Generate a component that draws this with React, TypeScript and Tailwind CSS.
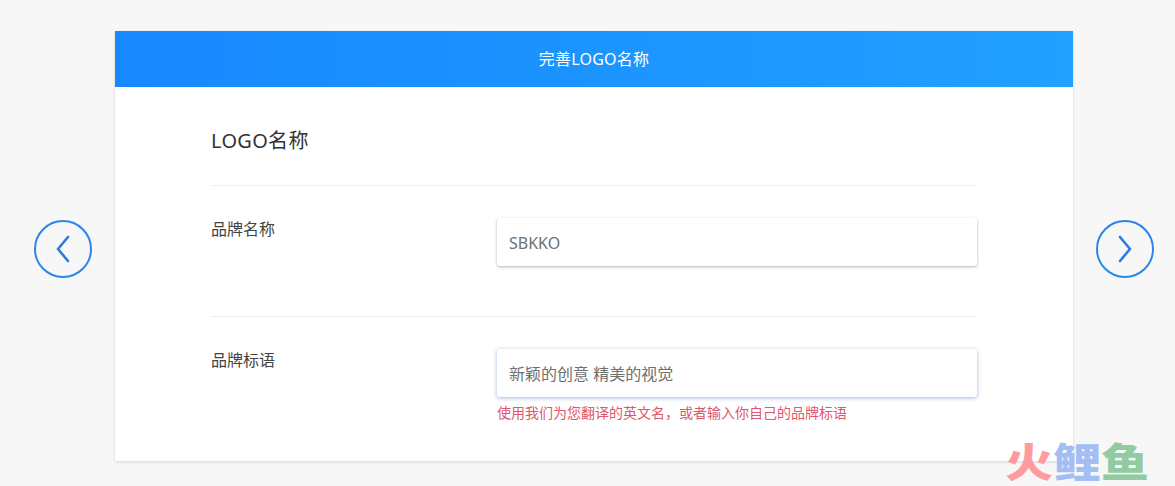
const font = "font-['Noto_Sans','Noto_Sans_CJK_SC',sans-serif]";

function Arrow({ direction }: { direction: 'left' | 'right' }) {
  return (
    <button className="mt-[189px] flex h-[58px] w-[58px] shrink-0 items-center justify-center rounded-full border-2 border-[#2b86ec]">
      <svg width="16" height="28" viewBox="0 0 16 28" fill="none">
        <path
          d={direction === 'left' ? 'M13 2 L3 14 L13 26' : 'M3 2 L13 14 L3 26'}
          stroke="#2b7be0"
          strokeWidth="2.6"
          strokeLinecap="round"
          strokeLinejoin="round"
        />
      </svg>
    </button>
  );
}

function Field({
  label,
  value,
  focused,
  hint,
}: {
  label: string;
  value: string;
  focused?: boolean;
  hint?: string;
}) {
  return (
    <div className="flex border-t border-[#eeeeee] pt-[31px]">
      <label className="w-[286px] shrink-0 text-[16px] leading-[24px] text-[#444444]">{label}</label>
      <div className="-mr-[1px] mt-[1px] w-[481px]">
        <div
          className={`flex h-[48px] items-center rounded-[3px] bg-white px-[12px] pt-[2px] text-[16px] text-[#707070] ${
            focused
              ? 'shadow-[0_1px_4px_rgba(90,140,200,0.6)]'
              : 'shadow-[0_1px_3px_rgba(0,0,0,0.3)]'
          }`}
        >
          {value}
        </div>
        {hint ? <p className="mt-[7px] text-[14px] leading-[18px] text-[#e0566a]">{hint}</p> : null}
      </div>
    </div>
  );
}

export default function App() {
  return (
    <div className={`relative flex h-[486px] justify-between overflow-hidden bg-[#f7f7f7] pl-[34px] pr-[21px] pt-[31px] ${font}`}>
      <Arrow direction="left" />
      <section className="h-[430px] w-[958px] shrink-0 bg-white shadow-[0_1px_3px_rgba(0,0,0,0.14)]">
        <header className="flex h-[56px] items-center justify-center bg-gradient-to-r from-[#1888fe] to-[#21a0ff] text-[16px] tracking-[0.2px] text-white">
          完善LOGO名称
        </header>
        <div className="pl-[96px] pr-[97px]">
          <h1 className="flex h-[98px] items-center pt-[10px] text-[20px] tracking-[0.3px] text-[#333333]">LOGO名称</h1>
          <div className="h-[131px]">
            <Field label="品牌名称" value="SBKKO" />
          </div>
          <Field
            label="品牌标语"
            value="新颖的创意 精美的视觉"
            focused
            hint="使用我们为您翻译的英文名，或者输入你自己的品牌标语"
          />
        </div>
      </section>
      <Arrow direction="right" />
      <div className="absolute left-[1005px] top-[438px] flex scale-y-[0.84] text-[48px] font-black leading-[48px]">
        <span className="text-[#ff9a9e]">火</span>
        <span className="text-[#a3bdf5]">鲤</span>
        <span className="text-[#92cba2]">鱼</span>
      </div>
    </div>
  );
}
